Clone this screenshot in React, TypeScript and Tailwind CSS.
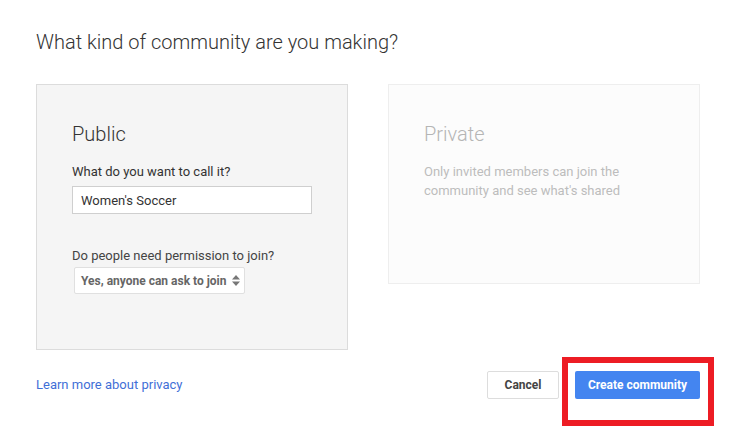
import { ChangeEvent, useState } from "react";

// Selector de tipo de comunidad (Public / Private) con acciones al pie.
const SelectArrows = () => (
  <svg width="8" height="11" viewBox="0 0 8 11" className="shrink-0">
    <path d="M4 0 L8 4.5 L0 4.5 Z" fill="#777" />
    <path d="M0 6.5 L8 6.5 L4 11 Z" fill="#777" />
  </svg>
);

export default function App() {
  const [name, setName] = useState("Women's Soccer");

  return (
    <div
      className="relative w-[731px] h-[428px] bg-white overflow-hidden"
      style={{ fontFamily: "Roboto, 'Liberation Sans', Arial, sans-serif" }}
    >
      <div className="flex flex-col pl-[36px] pr-[31px] pt-[28px]">
        <h1 className="text-[20px] leading-[28px] font-light text-[#333]">
          What kind of community are you making?
        </h1>

        {/* Cards */}
        <div className="flex items-start gap-[40px] mt-[28px]">
          {/* Public */}
          <div className="w-[312px] h-[266px] bg-[#f5f5f5] border border-[#dcdcdc] pl-[35px] pt-[37px] flex flex-col">
            <div className="text-[20px] leading-[24px] font-light text-[#333]">Public</div>
            <label className="mt-[18px] text-[13px] leading-[16px] text-[#333]">
              What do you want to call it?
            </label>
            <input
              value={name}
              onChange={(e: ChangeEvent<HTMLInputElement>) => setName(e.target.value)}
              className="mt-[6px] w-[240px] h-[28px] bg-white border border-[#cfcfcf] pl-[8px] text-[13px] text-[#333] outline-none"
            />
            <label className="mt-[34px] text-[13px] leading-[16px] text-[#444]">
              Do people need permission to join?
            </label>
            <div className="mt-[3px] ml-[2px] w-[171px] h-[27px] bg-white border border-[#e0e0e0] rounded-[2px] flex items-center justify-between pl-[6px] pr-[4px]">
              <span className="text-[12px] font-bold text-[#666]">Yes, anyone can ask to join</span>
              <SelectArrows />
            </div>
          </div>

          {/* Private */}
          <div className="w-[312px] h-[200px] bg-[#fcfcfc] border border-[#eeeeee] pl-[35px] pt-[37px] flex flex-col">
            <div className="text-[20px] leading-[24px] font-light text-[#b5b5b5]">Private</div>
            <p className="mt-[16px] w-[210px] text-[13px] leading-[19px] text-[#bdbdbd]">
              Only invited members can join the community and see what's shared
            </p>
          </div>
        </div>

        {/* Footer */}
        <div className="flex items-center justify-between mt-[21px]">
          <a href="#" className="text-[13px] leading-[16px] text-[#3f6fd7]">
            Learn more about privacy
          </a>
          <div className="flex items-center gap-[16px]">
            <button className="w-[72px] h-[28px] bg-white border border-[#dddddd] rounded-[2px] text-[12px] font-bold text-[#444]">
              Cancel
            </button>
            <button className="w-[125px] h-[28px] bg-[#4485f0] rounded-[2px] text-[12px] font-bold text-white">
              Create community
            </button>
          </div>
        </div>
      </div>

      {/* Anotación roja sobre el botón */}
      <div className="absolute left-[562px] top-[357px] w-[152px] h-[69px] border-[6px] border-[#ed1c24] pointer-events-none" />
    </div>
  );
}
